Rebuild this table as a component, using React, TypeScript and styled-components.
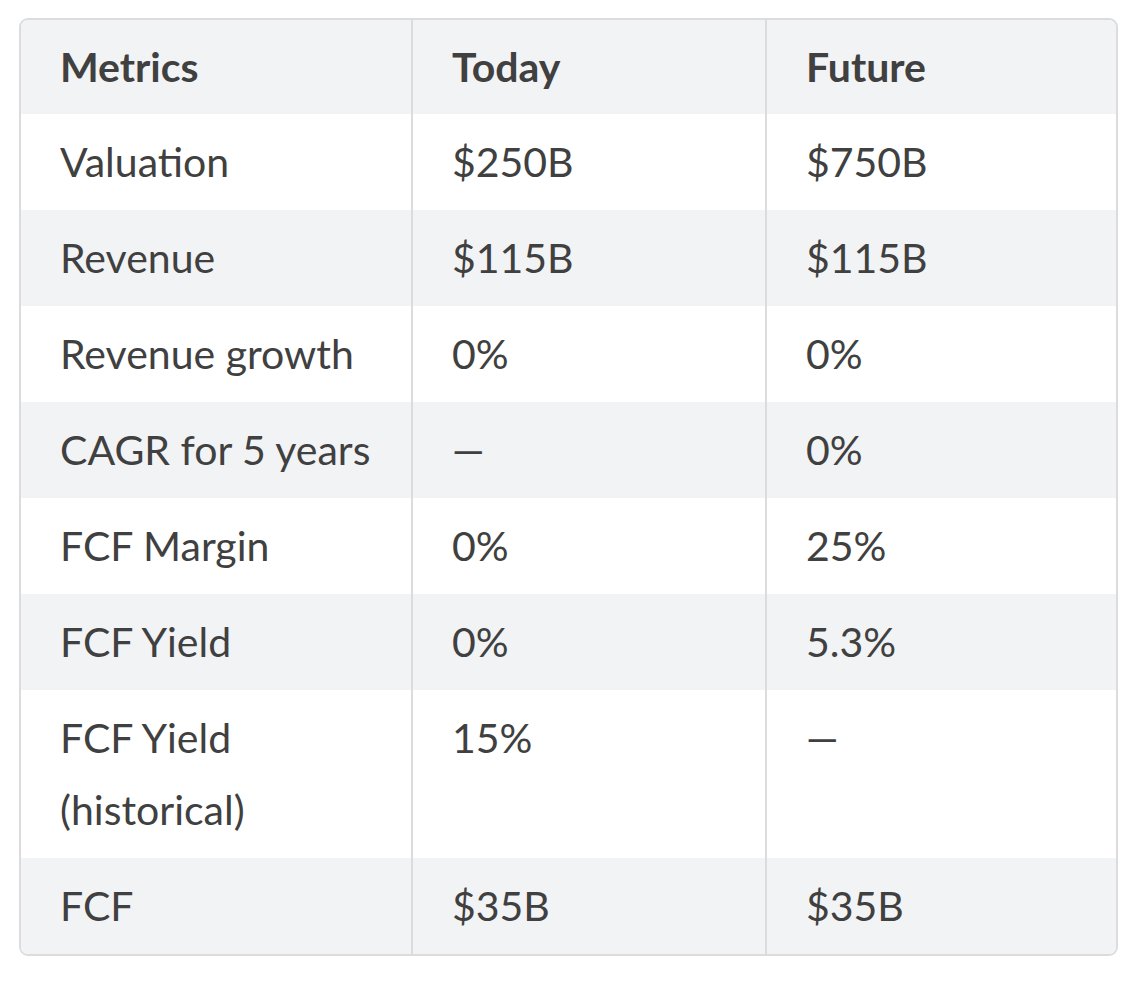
import React from "react";
import styled, { createGlobalStyle } from "styled-components";

const GlobalStyle = createGlobalStyle`
  html, body {
    margin: 0;
    padding: 0;
    background: #ffffff;
  }
`;

const Page = styled.div`
  padding: 18px 19px 0 19px;
  font-family: Lato, "Noto Sans", sans-serif;
  color: #404040;
`;

const TableWrapper = styled.div`
  box-sizing: border-box;
  width: 1099px;
  border: 2px solid #dcdcde;
  border-radius: 9px;
  overflow: hidden;
`;

const Table = styled.table`
  width: 100%;
  border-collapse: collapse;
  table-layout: fixed;
`;

const Row = styled.tr<{ $shaded: boolean }>`
  background: ${(p) => (p.$shaded ? "#f2f3f5" : "#ffffff")};
`;

const HeadCell = styled.th<{ $w?: number }>`
  width: ${(p) => (p.$w ? `${p.$w}px` : "auto")};
  text-align: left;
  vertical-align: top;
  font-weight: 700;
  font-size: 41px;
  line-height: 72px;
  padding: 11px 40px 11px 39px;
  border-left: 2px solid #dcdcde;
  &:first-child {
    border-left: none;
  }
`;

const Cell = styled.td`
  text-align: left;
  vertical-align: top;
  font-weight: 400;
  font-size: 41px;
  line-height: 72px;
  padding: 12px 40px 12px 39px;
  border-left: 2px solid #dcdcde;
  &:first-child {
    border-left: none;
  }
`;

const rows: [string, string, string][] = [
  ["Valuation", "$250B", "$750B"],
  ["Revenue", "$115B", "$115B"],
  ["Revenue growth", "0%", "0%"],
  ["CAGR for 5 years", "—", "0%"],
  ["FCF Margin", "0%", "25%"],
  ["FCF Yield", "0%", "5.3%"],
  ["FCF Yield (historical)", "15%", "—"],
  ["FCF", "$35B", "$35B"],
];

export default function App() {
  return (
    <Page>
      <GlobalStyle />
      <TableWrapper>
        <Table>
          <thead>
            <Row $shaded>
              <HeadCell $w={311}>Metrics</HeadCell>
              <HeadCell $w={273}>Today</HeadCell>
              <HeadCell>Future</HeadCell>
            </Row>
          </thead>
          <tbody>
            {rows.map((r, i) => (
              <Row key={r[0]} $shaded={i % 2 === 1}>
                <Cell>{r[0]}</Cell>
                <Cell>{r[1]}</Cell>
                <Cell>{r[2]}</Cell>
              </Row>
            ))}
          </tbody>
        </Table>
      </TableWrapper>
    </Page>
  );
}
